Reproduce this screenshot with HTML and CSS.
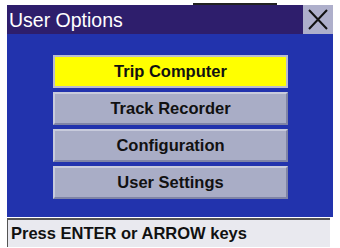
FILE: index.html
```html
<!DOCTYPE html>
<html>
<head>
<meta charset="utf-8">
<link rel="stylesheet" href="styles.css">
</head>
<body>
<div class="screen">
  <div class="topstrip"><div class="topline"></div></div>
  <div class="titlebar">
    <div class="title">User Options</div>
    <div class="close">
      <svg width="30" height="29" viewBox="0 0 30 29"><path d="M6 5 L24 24 M24 5 L6 24" stroke="#111" stroke-width="2" fill="none"/></svg>
    </div>
  </div>
  <div class="main">
    <div class="menu">
      <div class="btn active">Trip Computer</div>
      <div class="btn">Track Recorder</div>
      <div class="btn">Configuration</div>
      <div class="btn">User Settings</div>
    </div>
  </div>
  <div class="status">Press ENTER or ARROW keys</div>
</div>
</body>
</html>
```
FILE: styles.css
```css
html, body { margin: 0; padding: 0; background: #fff; }
.screen {
  width: 326px;
  padding-left: 7px;
  font-family: "Liberation Sans", Arial, sans-serif;
}
.topstrip { height: 5px; padding-top: 3px; box-sizing: border-box; }
.topline { margin-left: 186px; width: 84px; height: 2px; background: #222; }
.titlebar {
  height: 29px;
  background: #2e1e6c;
  display: flex;
  align-items: center;
  justify-content: space-between;
}
.title { color: #fff; font-size: 19.5px; padding-left: 2px; margin-top: 1px; }
.close { width: 30px; height: 29px; background: #aeafcb; display: flex; }
.main {
  height: 183px;
  background: #2233ad;
  padding-top: 21px;
  box-sizing: border-box;
}
.menu {
  margin-left: 46px;
  width: 235px;
  display: flex;
  flex-direction: column;
  gap: 4px;
}
.btn {
  height: 33px;
  box-sizing: border-box;
  background: #a9adc6;
  border-top: 2px solid #c8cbdc;
  border-left: 2px solid #c8cbdc;
  border-bottom: 2px solid #7f84a6;
  border-right: 2px solid #7f84a6;
  color: #111;
  font-weight: bold;
  font-size: 16.5px;
  display: flex;
  align-items: center;
  justify-content: center;
}
.btn.active {
  background: #ffff00;
  border-color: #b9bbcf;
}
.status {
  height: 29px;
  width: 323px;
  box-sizing: border-box;
  background: #e9e9ef;
  border-top: 2px solid #555;
  border-left: 1px solid #555;
  margin-top: 1px;
  font-weight: bold;
  font-size: 16.5px;
  color: #111;
  padding-left: 3px;
  display: flex;
  align-items: center;
}
```
